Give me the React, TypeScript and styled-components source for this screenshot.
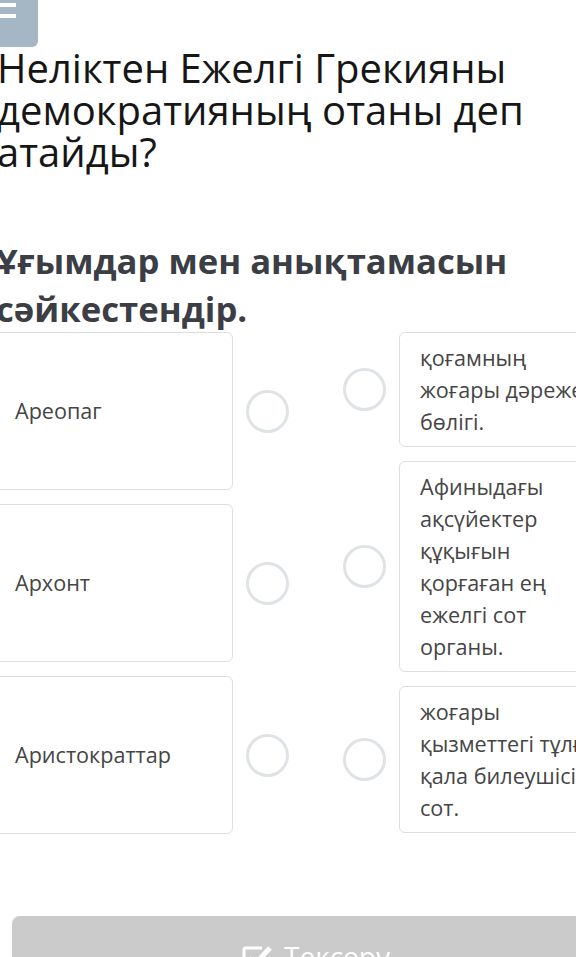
import React from "react";
import styled, { createGlobalStyle } from "styled-components";

const GlobalStyle = createGlobalStyle`
  html, body {
    margin: 0;
    padding: 0;
    background: #ffffff;
    overflow: hidden;
  }
  body {
    font-family: "Open Sans", "Noto Sans", sans-serif;
  }
`;

const Page = styled.div`
  width: 644px;
  margin-left: -6px;
  margin-top: -8px;
`;

const MenuButton = styled.div`
  width: 44px;
  height: 55px;
  background: #a5b6c4;
  border-radius: 6px;
  display: flex;
  padding: 0 0 0 6px;
  box-sizing: border-box;
`;

const Question = styled.h1`
  margin: 0;
  padding-left: 3px;
  font-size: 40px;
  line-height: 42px;
  font-weight: 400;
  color: #161616;
`;

const Instruction = styled.h2`
  margin: 64px 0 0 0;
  padding-left: 2px;
  font-size: 34.7px;
  line-height: 48px;
  font-weight: 700;
  color: #3b3e45;
`;

const Board = styled.div`
  display: flex;
  gap: 54px;
  margin-top: -1px;
  align-items: flex-start;
`;

const Column = styled.div`
  display: flex;
  flex-direction: column;
  gap: 14px;
`;

const PairRow = styled.div`
  display: flex;
  align-items: center;
  gap: 13px;
`;

const Card = styled.div`
  box-sizing: border-box;
  border: 1px solid #dedede;
  border-radius: 6px;
  background: #ffffff;
  padding: 0 20px;
  font-size: 21.6px;
  line-height: 32px;
  color: #454545;
`;

const TermCard = styled(Card)`
  width: 239px;
  height: 158px;
  display: flex;
  align-items: center;
`;

const DefinitionCard = styled(Card)`
  width: 230px;
  padding-top: 8.5px;
  padding-bottom: 8.5px;
`;

const Dot = styled.div`
  flex: none;
  box-sizing: border-box;
  width: 43px;
  height: 43px;
  border-radius: 50%;
  border: 3px solid #dfe3e6;
`;

const CheckButton = styled.div`
  margin: 82px 18px 0 18px;
  height: 90px;
  background: #cbcbcb;
  border-radius: 8px;
  display: flex;
  justify-content: center;
  align-items: flex-start;
  gap: 12px;
  padding-top: 21px;
  box-sizing: border-box;
  color: #ffffff;
  font-size: 28px;
  line-height: 1.4;
`;

const MenuIcon = () => (
  <svg width="20" height="30" viewBox="0 0 20 30">
    <rect x="0" y="0" width="16" height="4" fill="#ffffff" />
    <rect x="0" y="11" width="16" height="4" fill="#ffffff" />
    <rect x="0" y="22" width="16" height="4" fill="#ffffff" />
  </svg>
);

const CheckSquareIcon = () => (
  <svg width="30" height="30" viewBox="0 0 30 30" style={{ marginTop: 6 }}>
    <path
      d="M20 5 H3.5 A1.5 1.5 0 0 0 2 6.5 V26.5 A1.5 1.5 0 0 0 3.5 28 H23.5 A1.5 1.5 0 0 0 25 26.5 V17"
      fill="none"
      stroke="#ffffff"
      strokeWidth="3"
    />
    <path d="M7 15 L13 21 L28 5" fill="none" stroke="#ffffff" strokeWidth="5" />
  </svg>
);

const terms = ["Ареопаг", "Архонт", "Аристократтар"];
const definitions = [
  "қоғамның жоғары дәрежелі бөлігі.",
  "Афиныдағы ақсүйектер құқығын қорғаған ең ежелгі сот органы.",
  "жоғары қызметтегі тұлға, қала билеушісі, сот.",
];

export default function App() {
  return (
    <>
      <GlobalStyle />
      <Page>
        <MenuButton>
          <MenuIcon />
        </MenuButton>
        <Question>
          Неліктен Ежелгі Грекияны демократияның отаны деп атайды?
        </Question>
        <Instruction>Ұғымдар мен анықтамасын сәйкестендір.</Instruction>
        <Board>
          <Column>
            {terms.map((t) => (
              <PairRow key={t}>
                <TermCard>{t}</TermCard>
                <Dot />
              </PairRow>
            ))}
          </Column>
          <Column>
            {definitions.map((d) => (
              <PairRow key={d}>
                <Dot />
                <DefinitionCard>{d}</DefinitionCard>
              </PairRow>
            ))}
          </Column>
        </Board>
        <CheckButton>
          <CheckSquareIcon />
          <span>Тексеру</span>
        </CheckButton>
      </Page>
    </>
  );
}
